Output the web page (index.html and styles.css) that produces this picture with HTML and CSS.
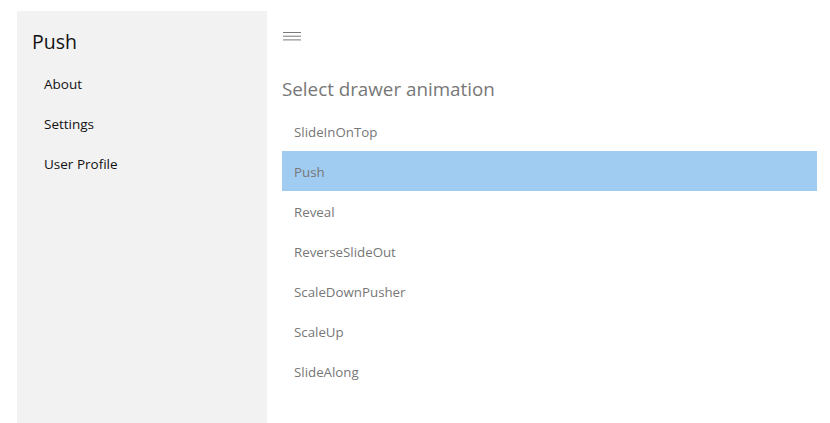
FILE: index.html
```html
<!DOCTYPE html>
<html>
<head>
<meta charset="utf-8">
<link rel="stylesheet" href="styles.css">
</head>
<body>
<div class="app">
  <aside class="drawer">
    <div class="drawer-title">Push</div>
    <nav class="drawer-nav">
      <div class="drawer-item">About</div>
      <div class="drawer-item">Settings</div>
      <div class="drawer-item">User Profile</div>
    </nav>
  </aside>
  <main class="content">
    <div class="hamburger">
      <svg width="18" height="9" viewBox="0 0 18 9"><rect x="0" y="0" width="18" height="1" fill="#7a7a7a"/><rect x="0" y="3.7" width="18" height="1" fill="#7a7a7a"/><rect x="0" y="7.4" width="18" height="1" fill="#7a7a7a"/></svg>
    </div>
    <h1 class="heading">Select drawer animation</h1>
    <ul class="list">
      <li class="list-item">SlideInOnTop</li>
      <li class="list-item selected">Push</li>
      <li class="list-item">Reveal</li>
      <li class="list-item">ReverseSlideOut</li>
      <li class="list-item">ScaleDownPusher</li>
      <li class="list-item">ScaleUp</li>
      <li class="list-item">SlideAlong</li>
    </ul>
  </main>
</div>
</body>
</html>
```
FILE: styles.css
```css
html, body {
  margin: 0;
  padding: 0;
  background: #ffffff;
  font-family: "Open Sans", "Noto Sans", sans-serif;
}
.app {
  display: flex;
  height: 423px;
  overflow: hidden;
}
.drawer {
  width: 250px;
  margin: 11px 0 0 17px;
  background: #f2f2f2;
  flex: none;
}
.drawer-title {
  font-size: 19.5px;
  color: #111;
  padding: 17px 0 0 15px;
  height: 36px;
  line-height: 28px;
}
.drawer-nav {
  display: flex;
  flex-direction: column;
  padding-left: 27px;
}
.drawer-item {
  height: 40px;
  line-height: 40px;
  font-size: 13.5px;
  color: #111;
}
.content {
  flex: 1;
  margin: 0 13px 0 15px;
}
.hamburger {
  height: 9px;
  padding: 32px 0 0 1px;
  line-height: 0;
}
.heading {
  margin: 0;
  padding-top: 34px;
  font-size: 18.8px;
  font-weight: normal;
  color: #777;
  line-height: 28px;
}
.list {
  list-style: none;
  margin: 8px 0 0 0;
  padding: 0;
}
.list-item {
  height: 39px;
  line-height: 40px;
  padding: 1px 0 0 12px;
  font-size: 13.3px;
  color: #777;
}
.list-item.selected {
  background: #a1ccf1;
}
```
